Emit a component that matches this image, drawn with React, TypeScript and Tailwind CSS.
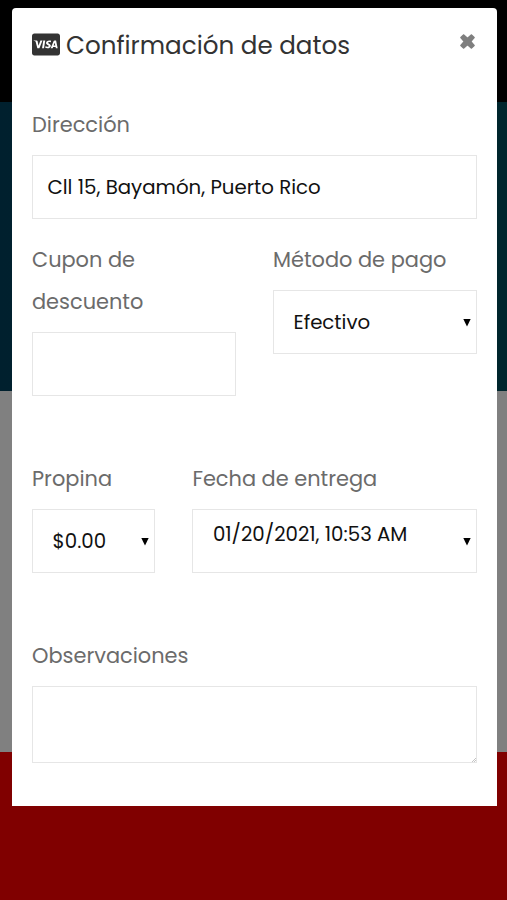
import type { ReactNode } from "react";
import { FaCcVisa } from "react-icons/fa";

function Field({ label, className = "", children }: { label: ReactNode; className?: string; children: ReactNode }) {
  return (
    <div className={className}>
      <div className="mb-[9px] pt-px text-[20.9px] leading-[42px] text-[#6b6b6b]">{label}</div>
      {children}
    </div>
  );
}

function Arrow() {
  return (
    <svg className="h-2 w-2 shrink-0" viewBox="0 0 8 8" fill="#000">
      <path d="M.3 0H7.7L4 7.6Z" />
    </svg>
  );
}

const box = "flex h-16 items-center border border-[#e6e6e6] bg-white pt-[2px] text-[19.75px] text-[#111] whitespace-nowrap";

export default function App() {
  return (
    <div className="grid h-[900px] w-[507px] overflow-hidden font-['Poppins','Inter',sans-serif]">
      <div className="col-start-1 row-start-1 flex flex-col">
        <div className="h-[102px] bg-black" />
        <div className="h-[289px] bg-linear-to-r from-[#00202e] to-[#00262d]" />
        <div className="h-[361px] bg-[#808080]" />
        <div className="grow bg-[#800000]" />
      </div>

      <div className="z-10 col-start-1 row-start-1 mt-2 ml-3 h-[798px] w-[485px] rounded-t-[4px] bg-white px-5">
        <div className="flex h-[95px] items-start justify-between">
          <div className="flex items-start pt-[22px]">
            <FaCcVisa className="mt-[2px] -ml-[0.5px] h-[25px] w-[28px] text-[#333]" />
            <h1 className="ml-[6.5px] text-[24.6px] leading-8 text-[#333]">Confirmación de datos</h1>
          </div>
          <button aria-label="Cerrar" className="mt-[26px] mr-[2px]">
            <svg className="h-[15px] w-[15px]" viewBox="0 0 15 15" fill="#7f7f7f">
              <path d="M3.5.8 7.5 4.2 11.5.8 14.2 3.5 10.8 7.5 14.2 11.5 11.5 14.2 7.5 10.8 3.5 14.2.8 11.5 4.2 7.5.8 3.5Z" stroke="#7f7f7f" strokeWidth="1.2" strokeLinejoin="round" />
            </svg>
          </button>
        </div>

        <Field label={<span>Dirección</span>}>
          <div className={`${box} pl-[14.5px]`}>
            <span>Cll 15, Bayamón, Puerto Rico</span>
          </div>
        </Field>

        <div className="mt-[19px] grid grid-cols-2 gap-[37px]">
          <Field label={<span>Cupon de<br />descuento</span>}>
            <div className={box} />
          </Field>
          <Field label={<span>Método de pago</span>}>
            <div className={`${box} justify-between pr-[5px] pl-[19.5px]`}>
              <span>Efectivo</span>
              <Arrow />
            </div>
          </Field>
        </div>

        <div className="mt-[61px] flex gap-[37px]">
          <Field className="w-[123.4px]" label={<span>Propina</span>}>
            <div className={`${box} justify-between pr-[5px] pl-[19.5px]`}>
              <span>$0.00</span>
              <Arrow />
            </div>
          </Field>
          <Field className="grow" label={<span>Fecha de entrega</span>}>
            <div className={`${box} justify-between pr-[5px] pl-[19.5px]`}>
              <span className="pb-[14px]">01/20/2021, 10:53 AM</span>
              <Arrow />
            </div>
          </Field>
        </div>

        <Field className="mt-[61px]" label={<span>Observaciones</span>}>
          <div className="flex h-[77px] items-end justify-end border border-[#e6e6e6]">
            <svg className="h-1 w-1" viewBox="0 0 4 4" stroke="#aaa" strokeWidth="0.7">
              <path d="M0 4 4 0M2 4 4 2" />
            </svg>
          </div>
        </Field>
      </div>
    </div>
  );
}
